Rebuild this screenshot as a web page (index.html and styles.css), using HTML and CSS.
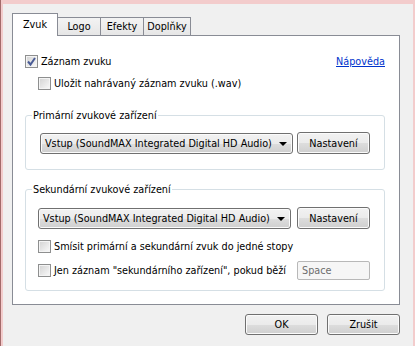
FILE: index.html
```html
<!DOCTYPE html>
<html lang="cs">
<head>
    <meta charset="UTF-8">
    <title>Nastavení zvuku</title>
    <link rel="stylesheet" href="styles.css">
</head>
<body>

    <div class="window">
        <div class="dialog">

            <div class="tabs">
                <div class="tab active">Zvuk</div>
                <div class="tab tab-logo">Logo</div>
                <div class="tab tab-efekty">Efekty</div>
                <div class="tab tab-doplnky">Doplňky</div>
            </div>

            <div class="panel">
                <div class="row">
                    <label class="check-row">
                        <span class="box checked">
                            <svg width="11" height="11" viewBox="0 0 11 11"><path d="M2 5.5 L4.5 8.5 L9 2" fill="none" stroke="#4a5c96" stroke-width="2"/></svg>
                        </span>
                        Záznam zvuku
                    </label>
                    <a href="#" class="help">Nápověda</a>
                </div>

                <div class="row sub">
                    <label class="check-row"><span class="box"></span>Uložit nahrávaný záznam zvuku (.wav)</label>
                </div>

                <fieldset class="group primary">
                    <legend>Primární zvukové zařízení</legend>
                    <div class="device-row">
                        <div class="combo">Vstup (SoundMAX Integrated Digital HD Audio)<span class="arrow"></span></div>
                        <button class="btn">Nastavení</button>
                    </div>
                </fieldset>

                <fieldset class="group secondary">
                    <legend>Sekundární zvukové zařízení</legend>
                    <div class="device-row">
                        <div class="combo">Vstup (SoundMAX Integrated Digital HD Audio)<span class="arrow"></span></div>
                        <button class="btn">Nastavení</button>
                    </div>
                    <div class="option-row mix">
                        <label class="check-row"><span class="box"></span>Smísit primární a sekundární zvuk do jedné stopy</label>
                    </div>
                    <div class="option-row only">
                        <label class="check-row"><span class="box"></span>Jen záznam "sekundárního zařízení", pokud běží</label>
                        <div class="hotkey">Space</div>
                    </div>
                </fieldset>
            </div>

            <div class="footer">
                <button class="btn">OK</button>
                <button class="btn">Zrušit</button>
            </div>

        </div>
    </div>

</body>
</html>
```

FILE: styles.css
```css
body {
    margin: 0;
    padding: 0;
    width: 415px;
    height: 346px;
    overflow: hidden;
    background: #f3cccc;
    font-family: "DejaVu Sans Condensed", "DejaVu Sans", sans-serif;
    font-size: 10.75px;
    color: #000;
}

.window {
    height: 346px;
    padding: 4px 2px 0 2px;
    box-sizing: border-box;
    border-left: 1px solid #a36b6b;
}

.dialog {
    height: 100%;
    background: #f0f0f0;
    padding: 9px 13px 0 9px;
    box-sizing: border-box;
}

/* zalozky */
.tabs {
    display: flex;
    align-items: flex-end;
    height: 22px;
}

.tab {
    height: 18px;
    line-height: 18px;
    box-sizing: border-box;
    text-align: center;
    border: 1px solid #898c95;
    border-bottom: none;
    background: linear-gradient(#f3f3f3, #e6e6e6);
    margin-left: -1px;
}

.tab.active {
    width: 46px;
    height: 23px;
    line-height: 21px;
    margin-left: 0;
    margin-bottom: -1px;
    background: #fff;
    position: relative;
    z-index: 1;
}

.tab-logo {
    width: 44px;
}

.tab-efekty {
    width: 44px;
}

.tab-doplnky {
    width: 48px;
}

.panel {
    background: #fff;
    border: 1px solid #898c95;
    padding: 19px 14px 13px 12px;
}

.row {
    display: flex;
    justify-content: space-between;
    align-items: center;
    height: 13px;
}

.row.sub {
    margin-top: 9px;
    padding-left: 13px;
}

.check-row {
    display: flex;
    align-items: center;
    gap: 3px;
    white-space: nowrap;
}

.box {
    width: 13px;
    height: 13px;
    box-sizing: border-box;
    border: 1px solid #8e8f8f;
    background: linear-gradient(135deg, #d2d2d2, #fafafa);
    box-shadow: inset 0 0 0 1px #f4f4f4;
    display: flex;
    align-items: center;
    justify-content: center;
}

.help {
    color: #0033cc;
    text-decoration: underline;
}

/* skupiny */
.group {
    margin: 0;
    border: 1px solid #d5dfe5;
    border-radius: 3px;
    padding: 10px 14px 15px 6px;
}

.group legend {
    padding: 0 1px;
    line-height: 13px;
}

.group.primary {
    margin-top: 19px;
}

.group.primary .device-row {
    margin-left: 8px;
}

.group.secondary {
    margin-top: 13px;
    padding-top: 11px;
    padding-bottom: 10px;
}

.group.secondary .device-row,
.group.secondary .option-row {
    margin-left: 6px;
}

.device-row {
    display: flex;
    justify-content: space-between;
    align-items: center;
    height: 22px;
}

.combo {
    width: 253px;
    height: 21px;
    box-sizing: border-box;
    border: 1px solid #707070;
    border-radius: 3px;
    background: linear-gradient(#f2f2f2, #ebebeb 50%, #dddddd 51%, #cfcfcf);
    box-shadow: inset 0 0 0 1px #fbfbfb;
    line-height: 19px;
    padding-left: 4px;
    position: relative;
    white-space: nowrap;
}

.arrow {
    position: absolute;
    right: 5px;
    top: 8px;
    border-left: 4px solid transparent;
    border-right: 4px solid transparent;
    border-top: 4px solid #000;
}

.btn {
    width: 73px;
    height: 22px;
    box-sizing: border-box;
    border: 1px solid #707070;
    border-radius: 3px;
    background: linear-gradient(#f2f2f2, #ebebeb 50%, #dddddd 51%, #cfcfcf);
    box-shadow: inset 0 0 0 1px #fbfbfb;
    font-family: inherit;
    font-size: 10.75px;
    color: #000;
    padding: 0;
}

.option-row {
    display: flex;
    justify-content: space-between;
    align-items: center;
}

.option-row.mix {
    margin-top: 11px;
    height: 13px;
}

.option-row.only {
    margin-top: 8px;
    height: 19px;
}

.hotkey {
    width: 73px;
    height: 19px;
    box-sizing: border-box;
    border: 1px solid #b8b8b8;
    border-radius: 2px;
    background: #f6f6f6;
    color: #6d6d6d;
    line-height: 17px;
    padding-left: 4px;
}

.footer {
    display: flex;
    justify-content: flex-end;
    gap: 9px;
    margin-top: 9px;
}

.footer .btn {
    height: 21px;
}
```
